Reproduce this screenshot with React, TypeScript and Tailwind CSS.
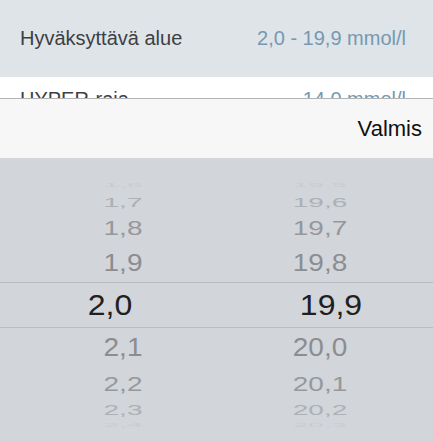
import React from 'react'

const font = { fontFamily: '"Liberation Sans", Arial, sans-serif' }

type Row = {
  h: number
  left: string
  right: string
  color: string
  scale: string
  selected?: boolean
}

const rows: Row[] = [
  { h: 14, left: '1,6', right: '19,5', color: 'text-[#c9ccd1]', scale: 'scale-y-[0.2]' },
  { h: 21, left: '1,7', right: '19,6', color: 'text-[#adb0b5]', scale: 'scale-y-[0.45]' },
  { h: 31, left: '1,8', right: '19,7', color: 'text-[#96989c]', scale: 'scale-y-[0.7]' },
  { h: 38, left: '1,9', right: '19,8', color: 'text-[#8b8d91]', scale: 'scale-y-[0.85]' },
  { h: 46, left: '2,0', right: '19,9', color: 'text-[#1f2022]', scale: 'scale-y-[0.95]', selected: true },
  { h: 39, left: '2,1', right: '20,0', color: 'text-[#8b8d91]', scale: 'scale-y-[0.93]' },
  { h: 33, left: '2,2', right: '20,1', color: 'text-[#96989c]', scale: 'scale-y-[0.75]' },
  { h: 19, left: '2,3', right: '20,2', color: 'text-[#adb0b5]', scale: 'scale-y-[0.55]' },
  { h: 12, left: '2,4', right: '20,3', color: 'text-[#c9ccd1]', scale: 'scale-y-[0.2]' },
]

function PickerRow({ row }: { row: Row }) {
  if (row.selected) {
    return (
      <div
        className="flex items-center border-y border-[#b9bcc1] text-[32px] leading-none"
        style={{ height: row.h }}
      >
        <div className={`w-[220px] shrink-0 text-center ${row.color} ${row.scale}`}>{row.left}</div>
        <div className={`w-[222px] shrink-0 text-center ${row.color} ${row.scale}`}>{row.right}</div>
      </div>
    )
  }
  return (
    <div className="flex items-center text-[28px] leading-none" style={{ height: row.h }}>
      <div className={`w-[246px] shrink-0 text-center ${row.color} ${row.scale}`}>{row.left}</div>
      <div className={`w-[148px] shrink-0 text-center ${row.color} ${row.scale}`}>{row.right}</div>
    </div>
  )
}

export default function App() {
  return (
    <div className="w-[433px] h-[441px] overflow-hidden flex flex-col" style={font}>
      {/* settings rows behind the picker */}
      <div className="bg-[#dfe4e8] flex justify-between items-start pl-5 pr-[27px] pt-[26px] h-[77px] text-[20px] leading-6">
        <span className="text-[#3d4043]">Hyväksyttävä alue</span>
        <span className="text-[#7599b2]">2,0 - 19,9 mmol/l</span>
      </div>
      <div className="bg-white h-[21px] overflow-hidden flex justify-between items-start pl-5 pr-[27px] pt-[10px] text-[20px] leading-6">
        <span className="text-[#3d4043]">HYPER-raja</span>
        <span className="text-[#7599b2]">14,0 mmol/l</span>
      </div>

      {/* toolbar */}
      <div className="h-[60px] bg-[#f7f7f7] border-t border-[#b4b4b4] flex items-center justify-end pr-[11px]">
        <span className="text-[22px] text-[#111] leading-none">Valmis</span>
      </div>

      {/* picker wheel */}
      <div className="flex-1 bg-[#d2d5da] overflow-hidden pt-[20px]">
        {rows.map((row) => (
          <PickerRow key={row.left} row={row} />
        ))}
      </div>
    </div>
  )
}
